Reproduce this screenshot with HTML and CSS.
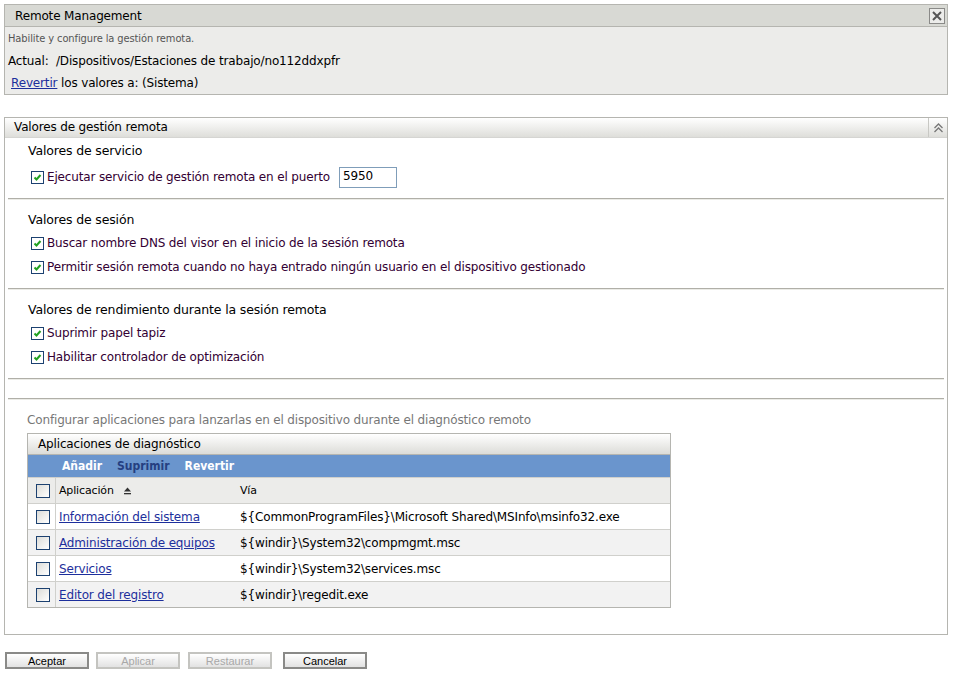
FILE: index.html
```html
<!DOCTYPE html>
<html lang="es">
<head>
    <meta charset="UTF-8">
    <title>Remote Management</title>
    <link rel="stylesheet" href="styles.css">
</head>
<body>

<div class="panel top-panel">
    <div class="panel-title">
        <span>Remote Management</span>
        <span class="close-btn">
            <svg width="12" height="12" viewBox="0 0 12 12"><path d="M2 2 L10 10 M10 2 L2 10" stroke="#555" stroke-width="2"/></svg>
        </span>
    </div>
    <div class="top-body">
        <div class="line desc">Habilite y configure la gestión remota.</div>
        <div class="line">Actual:&nbsp; /Dispositivos/Estaciones de trabajo/no112ddxpfr</div>
        <div class="line"><a href="#">Revertir</a> los valores a: (Sistema)</div>
    </div>
</div>

<div class="panel main-panel">
    <div class="section-head">
        <span class="section-title">Valores de gestión remota</span>
        <span class="collapse">
            <svg width="11" height="10" viewBox="0 0 11 10"><path d="M1.5 5 L5.5 1 L9.5 5 M1.5 9 L5.5 5 L9.5 9" fill="none" stroke="#777" stroke-width="1.3"/></svg>
        </span>
    </div>

    <div class="group first">
        <h3>Valores de servicio</h3>
        <div class="opt svc">
            <span class="cb on"></span>Ejecutar servicio de gestión remota en el puerto
            <span class="port">5950</span>
        </div>
    </div>
    <div class="rule"></div>

    <div class="group">
        <h3>Valores de sesión</h3>
        <div class="opt"><span class="cb on"></span>Buscar nombre DNS del visor en el inicio de la sesión remota</div>
        <div class="opt"><span class="cb on"></span>Permitir sesión remota cuando no haya entrado ningún usuario en el dispositivo gestionado</div>
    </div>
    <div class="rule"></div>

    <div class="group">
        <h3>Valores de rendimiento durante la sesión remota</h3>
        <div class="opt"><span class="cb on"></span>Suprimir papel tapiz</div>
        <div class="opt"><span class="cb on"></span>Habilitar controlador de optimización</div>
    </div>
    <div class="rule"></div>
    <div class="rule gap"></div>

    <p class="hint">Configurar aplicaciones para lanzarlas en el dispositivo durante el diagnóstico remoto</p>

    <div class="grid">
        <div class="grid-title">Aplicaciones de diagnóstico</div>
        <div class="toolbar">
            <span>Añadir</span>
            <span class="off">Suprimir</span>
            <span>Revertir</span>
        </div>
        <table>
            <tr class="head">
                <td class="c-cb"><span class="cb"></span></td>
                <td class="c-app">Aplicación
                    <svg class="sort" width="9" height="8" viewBox="0 0 9 8"><path d="M4.5 0.5 L8 4.5 L1 4.5 Z" fill="#333"/><rect x="1" y="6" width="7" height="1.3" fill="#333"/></svg>
                </td>
                <td>Vía</td>
            </tr>
            <tr>
                <td class="c-cb"><span class="cb"></span></td>
                <td class="c-app"><a href="#">Información del sistema</a></td>
                <td>${CommonProgramFiles}\Microsoft Shared\MSInfo\msinfo32.exe</td>
            </tr>
            <tr class="alt">
                <td class="c-cb"><span class="cb"></span></td>
                <td class="c-app"><a href="#">Administración de equipos</a></td>
                <td>${windir}\System32\compmgmt.msc</td>
            </tr>
            <tr>
                <td class="c-cb"><span class="cb"></span></td>
                <td class="c-app"><a href="#">Servicios</a></td>
                <td>${windir}\System32\services.msc</td>
            </tr>
            <tr class="alt">
                <td class="c-cb"><span class="cb"></span></td>
                <td class="c-app"><a href="#">Editor del registro</a></td>
                <td>${windir}\regedit.exe</td>
            </tr>
        </table>
    </div>
</div>

<div class="buttons">
    <button class="btn">Aceptar</button>
    <button class="btn disabled">Aplicar</button>
    <button class="btn disabled">Restaurar</button>
    <button class="btn cancel">Cancelar</button>
</div>

</body>
</html>
```

FILE: styles.css
```css
body {
    margin: 0;
    padding: 4px 6px 0 4px;
    font-family: "DejaVu Sans", sans-serif;
    font-size: 12px;
    letter-spacing: -0.15px;
    color: #000;
    background: #fff;
}
a {
    color: #1d2f9c;
    text-decoration: underline;
}
.panel {
    border: 1px solid #b5b5b0;
}
.top-panel {
    background-color: #ececea;
    height: 89px;
}
.panel-title {
    display: flex;
    justify-content: space-between;
    align-items: center;
    height: 21px;
    padding: 0 2px 0 10px;
    background-color: #d8d9d4;
    border-bottom: 1px solid #b5b5b0;
}
.close-btn {
    display: flex;
    align-items: center;
    justify-content: center;
    width: 14px;
    height: 14px;
    border: 1px solid #8a8a88;
    background-color: #ececea;
}
.top-body {
    padding: 1px 3px;
}
.line {
    height: 22px;
    line-height: 22px;
}
.line.desc {
    color: #555;
    font-family: "DejaVu Sans Condensed", "DejaVu Sans", sans-serif;
    font-size: 11px;
    letter-spacing: -0.1px;
}
.line a {
    margin-left: 3px;
}

.main-panel {
    margin-top: 22px;
    padding-bottom: 26px;
}
.section-head {
    display: flex;
    justify-content: space-between;
    height: 19px;
    border-bottom: 1px solid #d5d5d2;
    background: linear-gradient(#ffffff, #dededa);
}
.section-title {
    line-height: 19px;
    padding-left: 9px;
}
.collapse {
    display: flex;
    align-items: center;
    justify-content: center;
    width: 18px;
    border-left: 1px solid #c8c8c4;
}
.group {
    padding: 9px 0 9px 23px;
}
.group.first {
    padding-top: 2px;
    padding-bottom: 6px;
}
h3 {
    margin: 0;
    font-size: 12.5px;
    font-weight: normal;
    height: 22px;
    line-height: 22px;
}
.opt {
    display: flex;
    align-items: center;
    height: 24px;
    padding-left: 3px;
    color: #330033;
}
.opt.svc {
    height: 30px;
}
.cb {
    display: inline-block;
    box-sizing: border-box;
    width: 13px;
    height: 13px;
    margin-right: 3px;
    border: 1px solid #1c4170;
    background: linear-gradient(135deg, #dcdcd8, #ffffff);
}
.cb.on {
    background: #fff url("data:image/svg+xml;utf8,<svg xmlns='http://www.w3.org/2000/svg' width='11' height='11'><path d='M2.5 5.5 L4.5 7.5 L8.5 3' fill='none' stroke='%2321a121' stroke-width='2'/></svg>") no-repeat center;
}
.port {
    display: inline-block;
    box-sizing: border-box;
    width: 58px;
    height: 21px;
    margin-left: 9px;
    padding: 1px 3px;
    border: 1px solid #7f9db9;
    color: #000;
}
.rule {
    margin: 0 3px;
    height: 0;
    border-top: 1px solid #b0afa8;
    border-bottom: 1px solid #ebebe6;
}
.rule.gap {
    margin-top: 18px;
}
.hint {
    margin: 12px 0 5px 22px;
    line-height: 16px;
    color: #777;
}

.grid {
    margin-left: 22px;
    width: 642px;
    border: 1px solid #b5b5b0;
}
.grid-title {
    height: 20px;
    line-height: 20px;
    padding-left: 10px;
    background: linear-gradient(#ffffff, #dcdcd8);
    border-bottom: 1px solid #b5b5b0;
}
.toolbar {
    display: flex;
    gap: 15px;
    height: 22px;
    line-height: 22px;
    padding-left: 34px;
    background-color: #6a95cd;
    color: #fff;
    font-family: "DejaVu Sans Condensed", "DejaVu Sans", sans-serif;
    font-weight: bold;
    letter-spacing: 0;
}
.toolbar .off {
    color: #253f80;
}
table {
    width: 100%;
    border-collapse: collapse;
}
td {
    height: 25px;
    padding: 0;
    border-top: 1px solid #d0d0cc;
    white-space: nowrap;
}
tr.head td {
    background-color: #ececea;
    font-size: 11px;
}
tr.alt td {
    background-color: #f2f2f2;
}
.c-cb {
    width: 19px;
    padding-left: 8px;
    border-right: 1px solid #d0d0cc;
}
.c-cb .cb {
    width: 14px;
    height: 14px;
    vertical-align: middle;
}
.c-app {
    width: 181px;
    padding-left: 3px;
}
.sort {
    margin-left: 6px;
    vertical-align: middle;
}

.buttons {
    display: flex;
    margin-top: 17px;
    padding-left: 1px;
}
.btn {
    width: 84px;
    height: 17px;
    margin-right: 7px;
    padding: 0;
    font-family: "Liberation Sans", Arial, sans-serif;
    font-size: 11px;
    color: #000;
    background: linear-gradient(#ffffff, #e2e2e2);
    border: 2px solid #8a8a88;
}
.btn.disabled {
    color: #a8a8a8;
    border-color: #c4c4c0;
    margin-right: 8px;
}
.btn.cancel {
    margin-left: 3px;
}
```
